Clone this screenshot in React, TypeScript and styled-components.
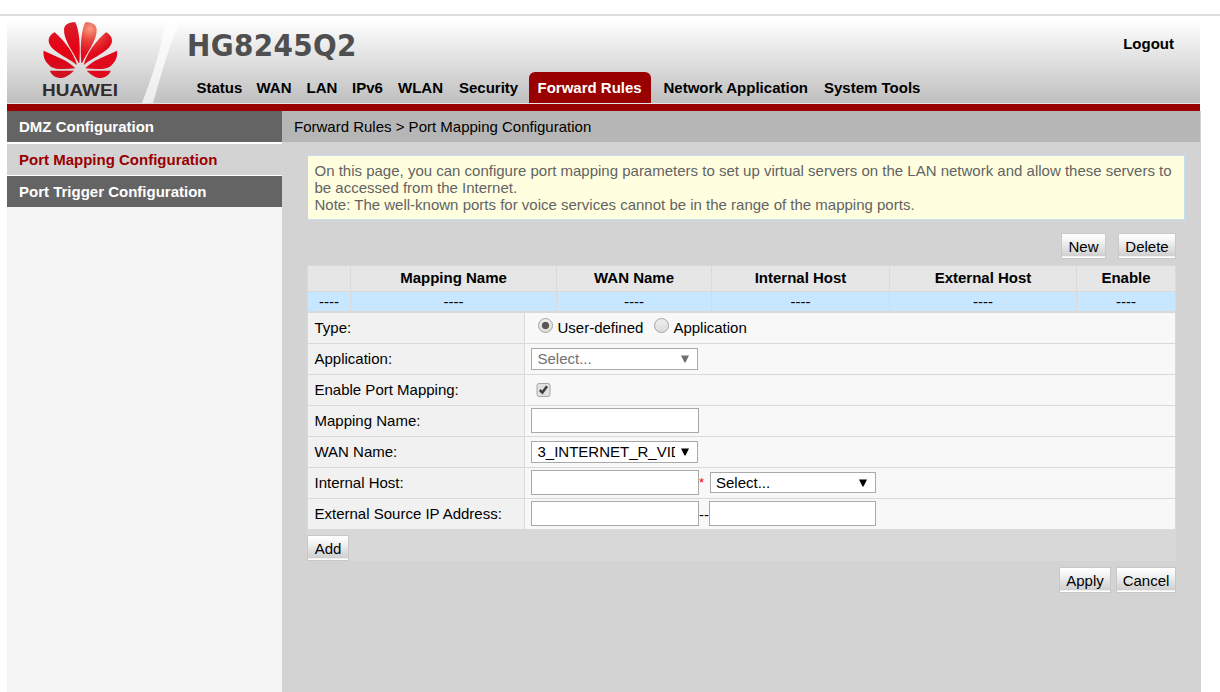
import React from "react";
import styled, { createGlobalStyle } from "styled-components";

const Global = createGlobalStyle`
  body { margin: 0; background: #fff; font: 15px/17px "Liberation Sans", Arial, sans-serif; color: #000; overflow: hidden; }
  * { box-sizing: border-box; }
`;

const Page = styled.div`
  height: 692px;
  padding-top: 14px;
  display: flex;
  flex-direction: column;
`;
const TopRule = styled.div`
  height: 2px;
  flex: none;
  background: #dcdbe0;
`;
const Header = styled.header`
  flex: none;
  width: 1193px;
  height: 95px;
  margin-left: 7px;
  display: flex;
  background: linear-gradient(#fff 0, #fff 4px, #c0c0c0 86px, #c0c0c0 87px, #e3e3e3 87px, #e3e3e3 88px, #990000 88px);
`;
const Brand = styled.svg`
  width: 181px;
  height: 87px;
  flex: none;
`;
const HeadMain = styled.div`
  flex: 1;
  display: flex;
  flex-direction: column;
  padding-top: 10px;
`;
const HeadRow = styled.div`
  display: flex;
  justify-content: space-between;
  padding-right: 26px;
  height: 46px;
`;
const Model = styled.h1`
  margin: 0 0 0 -1px;
  font: bold 31px/38px "DejaVu Sans Condensed", "DejaVu Sans", sans-serif;
  letter-spacing: 0.35px;
  color: #4f4f4f;
`;
const Logout = styled.a`
  font-weight: bold;
  line-height: 35px;
`;
const Nav = styled.nav`
  display: flex;
  height: 31px;
`;
const NavItem = styled.a<{ $w: number; $active?: boolean }>`
  width: ${(p) => p.$w}px;
  flex: none;
  margin-right: ${(p) => (p.$active ? 4 : 0)}px;
  padding-left: 8.5px;
  font-weight: bold;
  line-height: 32px;
  white-space: nowrap;
  color: ${(p) => (p.$active ? "#fff" : "#000")};
  background: ${(p) => (p.$active ? "#990000" : "none")};
  border-radius: 6px 6px 0 0;
`;
const Body = styled.div`
  flex: 1;
  display: flex;
  margin-left: 7px;
  width: 1194px;
`;
const Side = styled.aside`
  width: 275px;
  background: #f5f5f5;
`;
const SideItem = styled.a<{ $active?: boolean }>`
  display: block;
  box-sizing: content-box;
  height: 31px;
  padding-left: 12px;
  font-weight: bold;
  line-height: ${(p) => (p.$active ? 32 : 31)}px;
  color: ${(p) => (p.$active ? "#990000" : "#fff")};
  background: ${(p) => (p.$active ? "#d3d3d3" : "#646464")};
  border: solid #fff;
  border-width: ${(p) => (p.$active ? "2px 0 1px" : "0")};
`;
const Main = styled.main`
  flex: 1;
  background: #d3d3d3;
`;
const Crumb = styled.div`
  width: 918px;
  height: 31px;
  padding-left: 12px;
  line-height: 31px;
  background: #b6b6b6;
`;
const Content = styled.div`
  padding: 13px 17px 0 25px;
`;
const Notice = styled.div`
  height: 65px;
  margin: 0 -1px 0 1px;
  padding: 6px 0 0 5.5px;
  border: 1px solid #c3dff0;
  border-left-width: 0;
  padding-left: 6.5px;
  background: #ffffe0;
  color: #636363;
  white-space: nowrap;
`;
const Actions = styled.div<{ $gap: number; $top: number }>`
  display: flex;
  justify-content: flex-end;
  gap: ${(p) => p.$gap}px;
  padding: ${(p) => p.$top}px 8px 0 0;
`;
const Button = styled.button<{ $w: number }>`
  width: ${(p) => p.$w}px;
  height: 26px;
  padding: 0;
  border: 1px solid #c8c8c8;
  font: 15px/17px "Liberation Sans", Arial, sans-serif;
  color: #000;
  background: linear-gradient(#fff 0, #fafafa 4px, #cfcfcf 22px, #e0e0e0 22px, #fff 23px);
`;
const Grid = styled.div`
  display: grid;
  grid-template-columns: 42px 205px 154px 177px 186px 98px;
  gap: 1px;
  width: 869px;
  margin-top: 6px;
  padding: 1px 1px 0;
  background: #d9d9d9;
`;
const Th = styled.div`
  height: 25px;
  line-height: 24px;
  font-weight: bold;
  text-align: center;
  background: #e6e6e6;
`;
const Td = styled.div`
  height: 19px;
  line-height: 20px;
  text-align: center;
  background: #c6e7ff;
`;
const Form = styled.div`
  width: 869px;
  padding: 2px 1px 0;
  display: flex;
  flex-direction: column;
  gap: 1px;
  background: #d9d9d9;
`;
const Row = styled.div`
  display: flex;
  gap: 1px;
  height: 30px;
`;
const Label = styled.div`
  width: 216px;
  padding-left: 6.5px;
  line-height: 30px;
  background: #f1f1f1;
`;
const Field = styled.div`
  flex: 1;
  display: flex;
  align-items: center;
  padding-left: 6px;
  background: #f8f8f8;
`;
const Input = styled.input<{ $w: number }>`
  width: ${(p) => p.$w}px;
  height: 25px;
  margin: 0 0 1px;
  border: 1px solid #a9a9a9;
  background: #fff;
`;
const SelectBox = styled.div<{ $w: number; $muted?: boolean; $short?: boolean }>`
  display: flex;
  justify-content: space-between;
  align-items: center;
  width: ${(p) => p.$w}px;
  height: ${(p) => (p.$short ? 21 : 22)}px;
  margin-bottom: ${(p) => (p.$short ? 1 : 0)}px;
  padding: 0 8px 0 ${(p) => (p.$short ? 5 : 5.5)}px;
  border: 1px solid #a9a9a9;
  background: #fff;
  color: ${(p) => (p.$muted ? "#707070" : "#000")};
`;
const SelectText = styled.span`
  width: 137px;
  margin-top: -1px;
  overflow: hidden;
  white-space: nowrap;
`;
const Star = styled.span`
  width: 11px;
  margin-bottom: 2px;
  font-size: 13px;
  color: #f00;
`;
const Dashes = styled.span`
  width: 10px;
`;
const Options = styled.div`
  display: flex;
  gap: 10.5px;
  padding: 0 0 2px 7px;
`;
const Option = styled.label`
  display: flex;
  align-items: center;
`;
const Radio = styled.span<{ $on?: boolean }>`
  width: 15px;
  height: 15px;
  margin: 0 4.5px 4px 0;
  border: 1px solid #a4a4a4;
  border-radius: 50%;
  background: ${(p) => (p.$on ? "radial-gradient(circle, #585858 3.3px, transparent 4.1px)," : "")} linear-gradient(#eee, #dcdcdc);
`;
const CheckIcon = styled.svg`
  width: 15px;
  height: 15px;
  margin: 0 0 2px 4.5px;
`;
const AddBar = styled.div`
  width: 869px;
  height: 32px;
  padding-top: 6px;
  background: #d8d8d8;
`;

const petals = [
  "M236 189C222 160 190 120 192 88C193 74 208 66 226 67C238 90 242 140 238 189Z",
  "M231 195C205 172 146 152 146 122C146 110 155 101 164 97C192 120 222 160 231 195Z",
  "M226 205C195 208 160 211 146 194C132 180 129 166 131 152C165 168 207 182 226 205Z",
  "M222 212C207 226 192 236 178 234C162 231 153 222 150 212Z",
];

const Logo = () => (
  <Brand viewBox="0 0 181 87">
    <defs>
      <radialGradient id="shine" gradientUnits="userSpaceOnUse" cx="212" cy="86" r="75">
        <stop offset="0" stopColor="#f79c80" />
        <stop offset=".45" stopColor="#e8473f" />
        <stop offset="1" stopColor="#e00a1c" />
      </radialGradient>
      <linearGradient id="red" gradientUnits="userSpaceOnUse" x1="0" y1="67" x2="0" y2="235">
        <stop offset="0" stopColor="#d8202c" />
        <stop offset=".5" stopColor="#e60012" />
        <stop offset="1" stopColor="#cc1420" />
      </linearGradient>
      <linearGradient id="slash" x1="0" y1="0" x2="0" y2="1">
        <stop offset="0" stopColor="#fff" />
        <stop offset=".5" stopColor="#f7f7f7" />
        <stop offset="1" stopColor="#ececec" />
      </linearGradient>
    </defs>
    <path d="M159 0H176C162 28 155 56 146 87H135C147 56 156 27 159 0Z" fill="url(#slash)" />
    <g transform="translate(-7,-16) scale(.33333)">
      <g fill="url(#red)">{petals.map((d) => <path key={d} d={d} />)}</g>
      <g transform="translate(482,0) scale(-1,1)" fill="url(#shine)">
        {petals.map((d) => <path key={d} d={d} />)}
      </g>
    </g>
    <text x="35" y="80" fontFamily="Liberation Sans, Arial, sans-serif" fontWeight="bold" fontSize="16.5" textLength="76" lengthAdjust="spacingAndGlyphs" fill="#332c2b">HUAWEI</text>
  </Brand>
);

const Arrow = () => (
  <svg width="8" height="8" viewBox="0 0 8 8"><path d="M0 .5H8L4.500 7.500H3.500Z" fill="currentColor" /></svg>
);
const Check = () => (
  <CheckIcon viewBox="0 0 15 15">
    <rect x="1" y="1.500" width="13" height="13" rx="2" fill="#e2e2e2" stroke="#a6a6a6" />
    <path d="M3.800 8L6.400 10.600L11 4.200" fill="none" stroke="#404040" strokeWidth="2.600" />
  </CheckIcon>
);

const nav: [string, number][] = [
  ["Status", 60], ["WAN", 50], ["LAN", 45.5], ["IPv6", 46], ["WLAN", 61], ["Security", 78.5],
  ["Forward Rules", 122], ["Network Application", 160.5], ["System Tools", 120],
];
const heads = ["", "Mapping Name", "WAN Name", "Internal Host", "External Host", "Enable"];

export default function App() {
  return (
    <Page>
      <Global />
      <TopRule />
      <Header>
        <Logo />
        <HeadMain>
          <HeadRow><Model>HG8245Q2</Model><Logout>Logout</Logout></HeadRow>
          <Nav>
            {nav.map(([t, w]) => <NavItem key={t} $w={w} $active={t === "Forward Rules"}>{t}</NavItem>)}
          </Nav>
        </HeadMain>
      </Header>
      <Body>
        <Side>
          <SideItem>DMZ Configuration</SideItem>
          <SideItem $active>Port Mapping Configuration</SideItem>
          <SideItem>Port Trigger Configuration</SideItem>
        </Side>
        <Main>
          <Crumb>Forward Rules &gt; Port Mapping Configuration</Crumb>
          <Content>
            <Notice>
              On this page, you can configure port mapping parameters to set up virtual servers on the LAN network and allow these servers to<br />
              be accessed from the Internet.<br />
              Note: The well-known ports for voice services cannot be in the range of the mapping ports.
            </Notice>
            <Actions $gap={12} $top={13}><Button $w={45}>New</Button><Button $w={58}>Delete</Button></Actions>
            <Grid>
              {heads.map((h) => <Th key={h}>{h}</Th>)}
              {heads.map((h) => <Td key={h}>----</Td>)}
            </Grid>
            <Form>
              <Row><Label>Type:</Label><Field>
                <Options>
                  <Option><Radio $on />User-defined</Option>
                  <Option><Radio />Application</Option>
                </Options>
              </Field></Row>
              <Row><Label>Application:</Label><Field><SelectBox $w={167} $muted><SelectText>Select...</SelectText><Arrow /></SelectBox></Field></Row>
              <Row><Label>Enable Port Mapping:</Label><Field><Check /></Field></Row>
              <Row><Label>Mapping Name:</Label><Field><Input $w={168} /></Field></Row>
              <Row><Label>WAN Name:</Label><Field><SelectBox $w={167}><SelectText>3_INTERNET_R_VID</SelectText><Arrow /></SelectBox></Field></Row>
              <Row><Label>Internal Host:</Label><Field><Input $w={168} /><Star>*</Star><SelectBox $w={166} $short><SelectText>Select...</SelectText><Arrow /></SelectBox></Field></Row>
              <Row><Label>External Source IP Address:</Label><Field><Input $w={168} /><Dashes>--</Dashes><Input $w={167} /></Field></Row>
            </Form>
            <AddBar><Button $w={42}>Add</Button></AddBar>
            <Actions $gap={5} $top={6}><Button $w={52}>Apply</Button><Button $w={60}>Cancel</Button></Actions>
          </Content>
        </Main>
      </Body>
    </Page>
  );
}
